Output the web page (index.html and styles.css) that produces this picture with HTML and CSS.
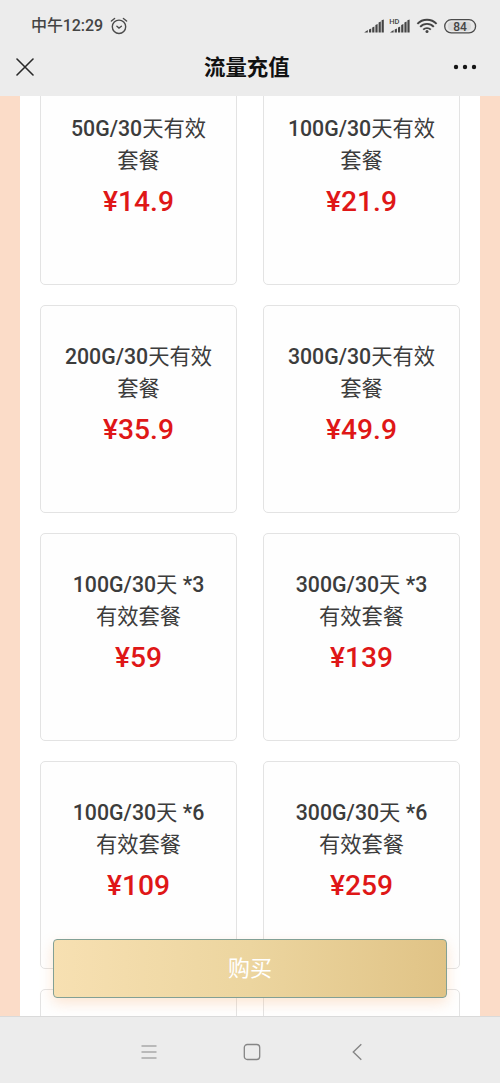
FILE: index.html
```html
<!DOCTYPE html>
<html lang="zh-CN">
<head>
<meta charset="utf-8">
<title>流量充值</title>
<link rel="stylesheet" href="styles.css">
</head>
<body>
<div class="phone">
  <header class="top">
    <div class="status">
      <span class="time">中午12:29</span>
      <svg class="alarm" width="18" height="18" viewBox="0 0 18 18" fill="none" stroke="#4b4b4b" stroke-width="1.4" stroke-linecap="round"><circle cx="9" cy="9.8" r="6.7"/><path d="M1.400 4 4.600 1.500M16.600 4 13.400 1.500M6.900 9.200 9 11l2.400-1.8"/></svg>
      <svg class="signals" width="130" height="20" viewBox="0 0 130 20">
        <g fill="#444">
          <path d="M1.200 16.500 4.800 14v2.500zM6 13.400l2.200-.8v3.900H6zM9.200 11.400l2.200-.9v6H9.200zM12.400 9l2.200-1v8.500h-2.200zM15.600 6.400l2.200-1v11.100h-2.200zM18.600 4.300l2.200-.8v13h-2.200z"/>
          <path d="M27 16.500 30.600 14v2.500zM31.700 13.400l2.200-.8v3.900h-2.200zM35 11.400l2.200-.9v6H35zM38.200 9l2.200-1v8.500h-2.200zM41.400 6.400l2.200-1v11.100h-2.200zM44.400 4.300l2.200-.8v13h-2.200z"/>
          <text class="hd" x="26.300" y="7.600">HD</text>
        </g>
        <g fill="none" stroke="#444" stroke-width="1.900"><path d="M54.400 7.900a13.300 13.300 0 0 1 19.200 0M57.200 10.900a9.200 9.200 0 0 1 13.600 0M60.200 13.700a5.400 5.400 0 0 1 7.600 0"/></g>
        <circle cx="64" cy="15.500" r="1.500" fill="#444"/>
        <rect x="81.700" y="3.700" width="30.900" height="13.200" rx="6.600" fill="#e8e8e8" stroke="#4b4b4b" stroke-width="1.300"/>
        <rect x="85" y="5.800" width="23" height="9" rx="4" fill="#d8d8d8"/>
        <text class="charge" x="97" y="14.700">84</text>
      </svg>
    </div>
    <div class="titlebar">
      <svg width="18" height="18" viewBox="0 0 18 18" fill="none" stroke="#292929" stroke-width="1.600" stroke-linecap="round"><path d="M1 1 17 17M17 1 1 17"/></svg>
      <h1 class="title">流量充值</h1>
      <svg width="24" height="6" viewBox="0 0 24 6" fill="#151515"><circle cx="3" cy="3" r="2.200"/><circle cx="12" cy="3" r="2.200"/><circle cx="21" cy="3" r="2.200"/></svg>
    </div>
  </header>
  <main class="page">
    <div class="plans">
      <section class="card"><div class="name"><b>50G/30</b>天有效<br>套餐</div><div class="price">¥14.9</div></section>
      <section class="card"><div class="name"><b>100G/30</b>天有效<br>套餐</div><div class="price">¥21.9</div></section>
      <section class="card"><div class="name"><b>200G/30</b>天有效<br>套餐</div><div class="price">¥35.9</div></section>
      <section class="card"><div class="name"><b>300G/30</b>天有效<br>套餐</div><div class="price">¥49.9</div></section>
      <section class="card"><div class="name"><b>100G/30</b>天<b> *3</b><br>有效套餐</div><div class="price">¥59</div></section>
      <section class="card"><div class="name"><b>300G/30</b>天<b> *3</b><br>有效套餐</div><div class="price">¥139</div></section>
      <section class="card"><div class="name"><b>100G/30</b>天<b> *6</b><br>有效套餐</div><div class="price">¥109</div></section>
      <section class="card"><div class="name"><b>300G/30</b>天<b> *6</b><br>有效套餐</div><div class="price">¥259</div></section>
      <section class="card"></section>
      <section class="card"></section>
    </div>
    <button class="buy">购买</button>
  </main>
  <nav class="navbar">
    <svg width="16" height="16" viewBox="0 0 16 16" fill="none" stroke="#858585" stroke-width="1.200"><path d="M.5 2h15M.5 8h15M.5 14h15"/></svg>
    <svg width="18" height="18" viewBox="0 0 18 18" fill="none" stroke="#858585" stroke-width="1.300"><rect x="1.300" y="1.500" width="15.400" height="15" rx="3"/></svg>
    <svg width="10" height="18" viewBox="0 0 10 18" fill="none" stroke="#858585" stroke-width="1.400"><path d="M9.300 1.200 1.300 9l8 7.800"/></svg>
  </nav>
</div>
</body>
</html>
```
FILE: styles.css
```css
* { box-sizing: border-box; }
body { margin: 0; font-family: Roboto, "Noto Sans CJK SC", sans-serif; }
.phone { width: 500px; height: 1083px; display: flex; flex-direction: column; overflow: hidden; background: #ececec; }
.top { height: 96px; flex: none; background: #ececec; }
.status { height: 38px; display: flex; align-items: center; padding: 13px 0 0 31px; }
.time { font-size: 16px; line-height: 24px; font-weight: 500; color: #444; white-space: nowrap; padding-top: 1px; width: 72px; letter-spacing: -.1px; }
.alarm { margin-left: 7px; }
.signals { margin-left: auto; margin-right: 7px; }
.hd { font: 500 7.500px Roboto, sans-serif; }
.charge { font: 500 12px Roboto, sans-serif; fill: #444; text-anchor: middle; }
.titlebar { height: 58px; display: flex; align-items: center; padding: 0 23px 0 16px; }
.title { margin: 0 auto 0 170px; padding-top: 2px; font-size: 21.400px; line-height: 30px; font-weight: 700; color: #111; }
.page { position: relative; height: 920px; flex: none; overflow: hidden; background: #fbdcc8; padding: 0 20px; }
.plans { display: grid; grid-template-columns: 197px 197px; grid-auto-rows: 208px; gap: 20px 26px; justify-content: center; margin-top: -19.400px; background: #fff; }
.card { border: 1px solid #e3e3e3; border-radius: 5px; background: #fefefe; padding-top: 35px; text-align: center; }
.name { font-size: 21.300px; line-height: 32px; color: #3c3c3c; white-space: nowrap; }
.name b { font-weight: 500; }
.price { margin-top: 3px; font-size: 28.200px; line-height: 44px; font-weight: 500; color: #df1717; }
.buy { position: absolute; left: 53px; top: 843px; width: 394px; height: 59px; border: 1px solid #82a095; border-radius: 4px; background: linear-gradient(90deg, #f7e0b2, #ecd59f 50%, #e0c386) border-box; box-shadow: 0 5px 14px rgba(250, 180, 120, .33); color: #fff; font: 400 22px/53px "Noto Sans CJK SC", sans-serif; padding: 0 0 4px; }
.navbar { flex: 1; display: flex; align-items: center; border-top: 1px solid #dadada; background: #ececec; padding: 3px 0 0 141px; }
.navbar svg:nth-child(2) { margin-left: 86px; }
.navbar svg:nth-child(3) { margin-left: 91px; }
```
